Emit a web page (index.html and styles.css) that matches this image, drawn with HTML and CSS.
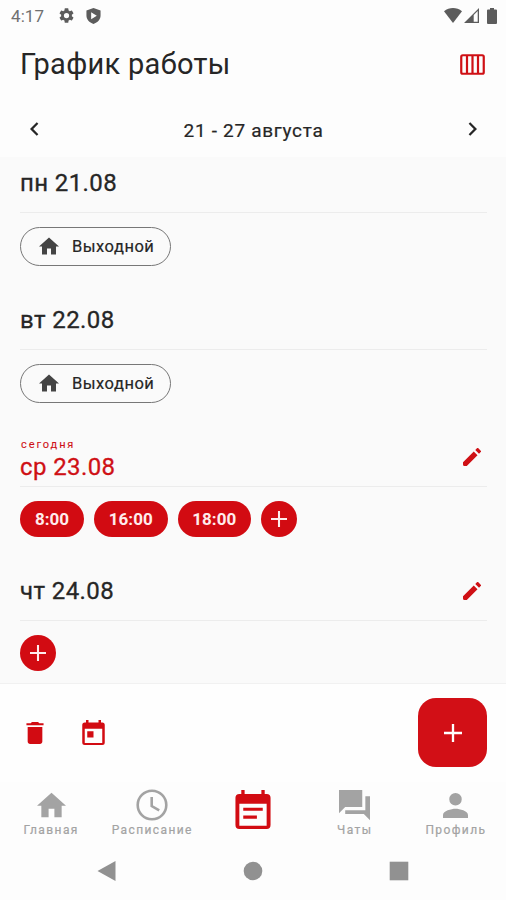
FILE: index.html
```html
<!DOCTYPE html>
<html lang="ru">
<head>
<meta charset="utf-8">
<title>График работы</title>
<link rel="stylesheet" href="styles.css">
</head>
<body>
<svg class="sprite" aria-hidden="true">
  <symbol id="home" viewBox="2 3 20 17"><path d="M10 20v-6h4v6h5v-8h3L12 3 2 12h3v8z"/></symbol>
  <symbol id="pencil" viewBox="3 3 18 18"><path d="M3 17.250V19.500Q3 21 4.500 21H6.750L17.500 10.250l-3.750-3.750zM20.710 7.040a1 1 0 0 0 0-1.410l-2.340-2.340a1 1 0 0 0-1.410 0l-1.700 1.700 3.750 3.750z"/></symbol>
  <symbol id="plus" viewBox="5 5 14 14"><path d="M19 12.900h-6.100v6.100h-1.800v-6.100H5v-1.800h6.100V5h1.800v6.100h6.100z"/></symbol>
</svg>
<div class="app">
  <header class="status">
    <span class="clock">4:17</span>
    <svg class="gear" viewBox="2 2 20 20"><path fill-rule="evenodd" d="M19.14 12.94a7 7 0 0 0 0-1.88l2.03-1.58a.5.5 0 0 0 .12-.61l-1.92-3.32a.5.5 0 0 0-.59-.22l-2.39.96a7 7 0 0 0-1.62-.94l-.36-2.54A.5.5 0 0 0 13.92 2.4h-3.84a.5.5 0 0 0-.47.41l-.36 2.54a7 7 0 0 0-1.62.94l-2.39-.96a.5.5 0 0 0-.59.22L2.74 8.87a.5.5 0 0 0 .12.61l2.03 1.58a7 7 0 0 0 0 1.88l-2.03 1.58a.5.5 0 0 0-.12.61l1.92 3.32c.12.22.37.29.59.22l2.39-.96c.5.38 1.03.7 1.62.94l.36 2.54c.05.24.24.41.48.41h3.84c.24 0 .44-.17.47-.41l.36-2.54a7 7 0 0 0 1.62-.94l2.39.96c.22.08.47 0 .59-.22l1.92-3.32a.5.5 0 0 0-.12-.61zM12 15.500a3.500 3.500 0 1 1 0-7 3.500 3.500 0 0 1 0 7z"/></svg>
    <svg class="shield" viewBox="0 0 15 17"><path fill-rule="evenodd" d="M7.5 0 15 2.7V8c0 4.200-3 7.500-7.500 9C3 15.500 0 12.200 0 8V2.700zM5 4.500v7.500l6-3.750z"/></svg>
    <span class="spacer"></span>
    <svg class="wifi" viewBox="0 0 18 15"><path d="M0 3.200C5.300-1 12.700-1 18 3.200L9 15z"/></svg>
    <svg class="signal" viewBox="0 0 15 15"><path fill-rule="evenodd" d="M15 0v15H0zM9.700 7v6.700h4V3z"/></svg>
    <svg class="battery" viewBox="0 0 10 16"><path d="M3 0h4v1.500h2a1 1 0 0 1 1 1V15a1 1 0 0 1-1 1H1a1 1 0 0 1-1-1V2.500a1 1 0 0 1 1-1h2z"/></svg>
  </header>
  <div class="title-row">
    <h1>График работы</h1>
    <svg class="columns" viewBox="0 0 25 21"><rect x="1.250" y="1.250" width="22.500" height="18.500" rx="1.500"/><path d="M7 1v19M12.500 1v19M18 1v19"/></svg>
  </div>
  <div class="week-row">
    <svg class="chevron" viewBox="8 6 8 12"><path d="M15.410 7.410 14 6l-6 6 6 6 1.410-1.410L10.830 12z"/></svg>
    <span class="week">21 - 27 августа</span>
    <svg class="chevron" viewBox="8 6 8 12"><path d="M10 6 8.590 7.410 13.170 12l-4.580 4.590L10 18l6-6z"/></svg>
  </div>
  <main class="days">
    <section class="day">
      <div class="day-head"><h2>пн 21.08</h2></div>
      <div class="slots"><span class="off"><svg><use href="#home"/></svg>Выходной</span></div>
    </section>
    <section class="day">
      <div class="day-head"><h2>вт 22.08</h2></div>
      <div class="slots"><span class="off"><svg><use href="#home"/></svg>Выходной</span></div>
    </section>
    <section class="day today">
      <div class="day-head"><div class="label"><small>сегодня</small><h2>ср 23.08</h2></div><svg class="edit"><use href="#pencil"/></svg></div>
      <div class="slots"><span class="slot short">8:00</span><span class="slot">16:00</span><span class="slot">18:00</span><span class="add"><svg><use href="#plus"/></svg></span></div>
    </section>
    <section class="day">
      <div class="day-head"><h2>чт 24.08</h2><svg class="edit"><use href="#pencil"/></svg></div>
      <div class="slots"><span class="add"><svg><use href="#plus"/></svg></span></div>
    </section>
  </main>
  <div class="actions">
    <svg class="trash" viewBox="5 3 14 18"><path d="M6 19c0 1.100.9 2 2 2h8c1.100 0 2-.9 2-2V7H6zM19 4h-3.500l-1-1h-5l-1 1H5v1.600h14z"/></svg>
    <svg class="cal" viewBox="3 1 18 20"><path fill-rule="evenodd" d="M19 3h-1V1h-2v2H8V1H6v2H5a2 2 0 0 0-2 2v14a2 2 0 0 0 2 2h14a2 2 0 0 0 2-2V5a2 2 0 0 0-2-2zm0 16.300H5V8h14zM7 10h5v5H7z"/></svg>
    <button class="fab" aria-label="Добавить"><svg><use href="#plus"/></svg></button>
  </div>
  <nav class="tabs">
    <div class="tab"><div class="glyph"><svg class="t-home"><use href="#home"/></svg></div><span>Главная</span></div>
    <div class="tab"><div class="glyph"><svg class="t-clock" viewBox="0 0 32 32"><circle cx="16" cy="16" r="14.300"/><path d="M15.700 8v9l7.500 4.400"/></svg></div><span>Расписание</span></div>
    <div class="tab active"><svg class="t-event" viewBox="3 1 18 20"><path fill-rule="evenodd" d="M19 3h-1V1h-1.700v2H7.700V1H6v2H5a2 2 0 0 0-2 2v14a2 2 0 0 0 2 2h14a2 2 0 0 0 2-2V5a2 2 0 0 0-2-2zm0 16.300H5V8h14zM7 10.100h10v1.600H7zM7 14.100h7v1.600H7z"/></svg></div>
    <div class="tab"><div class="glyph"><svg class="t-chat" viewBox="2 2 20 20"><path d="M22 6h-3v9H6v2.500h12l4 4zM17 13V2H2v15l4-4z"/></svg></div><span>Чаты</span></div>
    <div class="tab"><div class="glyph"><svg class="t-user" viewBox="4 4 16 16"><path d="M12 12a4 4 0 1 0 0-8 4 4 0 0 0 0 8zm0 2c-2.670 0-8 1.340-8 4v2h16v-2c0-2.660-5.330-4-8-4z"/></svg></div><span>Профиль</span></div>
  </nav>
  <footer class="system">
    <svg viewBox="0 0 20 20"><path d="M18.500 0v20L.5 10z"/></svg>
    <svg viewBox="0 0 20 20"><circle cx="10" cy="10" r="9.300"/></svg>
    <svg viewBox="0 0 20 20"><path d="M.7.7h18.600v18.600H.7z"/></svg>
  </footer>
</div>
</body>
</html>
```

FILE: styles.css
```css
* { box-sizing: border-box; }
body { margin: 0; font-family: Roboto, "Noto Sans", sans-serif; color: #262626; background: #fdfdfd; }
svg { display: block; flex: none; fill: currentColor; }
.sprite { position: absolute; width: 0; height: 0; }
h1, h2 { margin: 0; font-weight: 400; }
.app { width: 506px; height: 900px; display: flex; flex-direction: column; overflow: hidden; }

.status { height: 31px; padding: 0 9px 0 11px; display: flex; align-items: center; color: #5c5c5c; }
.clock { width: 48px; font-size: 17px; color: #707070; letter-spacing: .1px; }
.gear { width: 15px; height: 15px; }
.shield { width: 15px; height: 16px; margin-left: 12px; }
.spacer { flex: 1; }
.wifi { width: 18px; height: 15px; }
.signal { width: 15px; height: 15px; margin-left: 2px; }
.battery { width: 10px; height: 16px; margin-left: 8px; }

.title-row { height: 66px; padding: 0 21px 0 20px; display: flex; align-items: center; justify-content: space-between; }
h1 { font-size: 29px; line-height: 32px; letter-spacing: .3px; }
.columns { width: 25px; height: 21px; color: #cf1015; fill: none; stroke: currentColor; stroke-width: 2.2; }
.week-row { height: 60px; padding: 3px 29px 0 30px; display: flex; align-items: center; justify-content: space-between; }
.chevron { width: 9px; height: 14px; }
.week { padding-top: 3px; font-size: 19px; letter-spacing: .7px; -webkit-text-stroke: .2px currentColor; }

.days { height: 527px; flex: none; padding: 0 19px 0 20px; background: #fafafa; border-bottom: 1px solid #f1f1f1; }
.day-head { height: 56px; padding-bottom: 4px; display: flex; align-items: center; justify-content: space-between; border-bottom: 1px solid #ececec; }
h2 { padding: 1px 0 0; font-size: 24px; line-height: 28px; letter-spacing: .4px; -webkit-text-stroke: .3px currentColor; }
.edit { width: 18px; height: 18px; margin-right: 6px; color: #cf1015; }
.slots { padding: 14px 0 28px; display: flex; gap: 10px; }
.off { height: 39px; width: 151px; padding-left: 18px; display: flex; align-items: center; border: 1px solid #777; border-radius: 20px; font-size: 16.500px; line-height: 18px; letter-spacing: .5px; -webkit-text-stroke: .2px currentColor; }
.off svg { width: 20px; height: 18px; margin-right: 13px; margin-top: -1px; color: #444; }
.today .day-head { color: #cf1015; }
.today .label { padding-top: 8px; }
.today small { display: block; padding-left: 1px; font-size: 11px; line-height: 12px; letter-spacing: 1.900px; -webkit-text-stroke: .1px currentColor; }
.today h2 { line-height: 31px; }
.slot { width: 73.500px; height: 36px; line-height: 37px; border-radius: 18px; background: #d20b12; color: #ffecec; font-size: 17px; font-weight: 700; text-align: center; letter-spacing: 0; }
.slot.short { width: 64px; }
.add { width: 36px; height: 36px; border-radius: 50%; background: #d20b12; color: #ffecec; display: grid; place-items: center; }
.add svg { width: 16px; height: 16px; }

.actions { height: 98px; flex: none; padding: 0 19px 0 26px; display: flex; align-items: center; color: #d20b12; background: #fefefe; }
.trash { width: 18px; height: 22px; }
.cal { width: 23px; height: 25px; margin: -1px 0 0 38px; }
.fab { width: 69px; height: 69px; margin: -1px 0 0 auto; padding: 0; border: 0; border-radius: 18px; background: #d20f16; color: #fff; display: grid; place-items: center; }
.fab svg { width: 18px; height: 18px; }

.tabs { height: 64px; flex: none; display: grid; grid-template-columns: repeat(5, 1fr); color: #a3a3a3; }
.tab { display: flex; flex-direction: column; align-items: center; font-size: 12px; line-height: 14px; letter-spacing: 1.400px; padding-left: 1px; }
.tab span { padding-top: 1px; -webkit-text-stroke: .2px currentColor; }
.glyph { height: 40px; padding-top: 6px; display: grid; place-items: center; }
.t-home { width: 29px; height: 26px; }
.t-clock { width: 32px; height: 32px; fill: none; stroke: currentColor; stroke-width: 2.600; }
.t-event { width: 36px; height: 39px; margin-top: 8px; color: #d20b12; }
.t-chat { width: 31px; height: 31px; }
.t-user { width: 25px; height: 25px; }
.system { height: 50px; padding: 0 97px; display: flex; align-items: center; justify-content: space-between; color: #919191; }
.system svg { width: 20px; height: 20px; }
```
